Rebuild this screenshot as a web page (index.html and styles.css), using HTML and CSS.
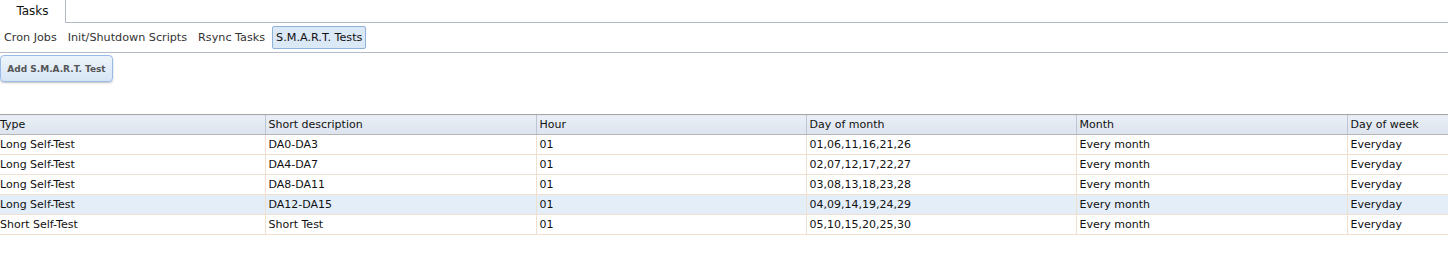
FILE: index.html
```html
<!DOCTYPE html>
<html>
<head>
  <title>Tasks</title>
  <link rel="stylesheet" href="styles.css">
</head>
<body>
  <div class="tab-bar">
    <a href="#" class="tab active">Tasks</a>
  </div>

  <div class="sub-tabs">
    <a href="#">Cron Jobs</a>
    <a href="#">Init/Shutdown Scripts</a>
    <a href="#">Rsync Tasks</a>
    <a href="#" class="active">S.M.A.R.T. Tests</a>
  </div>

  <div class="toolbar">
    <button type="button" class="add-btn">Add S.M.A.R.T. Test</button>
  </div>

  <table class="grid">
    <colgroup>
      <col class="c1">
      <col class="c2">
      <col class="c3">
      <col class="c4">
      <col class="c5">
      <col>
    </colgroup>
    <thead>
      <tr>
        <th>Type</th>
        <th>Short description</th>
        <th>Hour</th>
        <th>Day of month</th>
        <th>Month</th>
        <th>Day of week</th>
      </tr>
    </thead>
    <tbody>
      <tr>
        <td>Long Self-Test</td>
        <td>DA0-DA3</td>
        <td>01</td>
        <td>01,06,11,16,21,26</td>
        <td>Every month</td>
        <td>Everyday</td>
      </tr>
      <tr>
        <td>Long Self-Test</td>
        <td>DA4-DA7</td>
        <td>01</td>
        <td>02,07,12,17,22,27</td>
        <td>Every month</td>
        <td>Everyday</td>
      </tr>
      <tr>
        <td>Long Self-Test</td>
        <td>DA8-DA11</td>
        <td>01</td>
        <td>03,08,13,18,23,28</td>
        <td>Every month</td>
        <td>Everyday</td>
      </tr>
      <tr class="hover">
        <td>Long Self-Test</td>
        <td>DA12-DA15</td>
        <td>01</td>
        <td>04,09,14,19,24,29</td>
        <td>Every month</td>
        <td>Everyday</td>
      </tr>
      <tr>
        <td>Short Self-Test</td>
        <td>Short Test</td>
        <td>01</td>
        <td>05,10,15,20,25,30</td>
        <td>Every month</td>
        <td>Everyday</td>
      </tr>
    </tbody>
  </table>
</body>
</html>
```

FILE: styles.css
```css
body {
  font-family: "DejaVu Sans", Verdana, sans-serif;
  font-size: 11px;
  color: #111;
  background-color: white;
  margin: 0;
  padding: 0;
}

a {
  color: #222;
  text-decoration: none;
}

/* top tab strip */
.tab-bar {
  display: flex;
  height: 22px;
  border-bottom: 1px solid #b3bac6;
}

.tab {
  display: block;
  width: 66px;
  height: 23px;
  line-height: 23px;
  text-align: center;
  font-size: 12px;
  color: #111;
  background-color: white;
  border-right: 1px solid #b3bac6;
  box-sizing: border-box;
}

/* second row of tabs */
.sub-tabs {
  display: flex;
  align-items: center;
  gap: 1px;
  height: 29px;
  padding-left: 0;
  border-bottom: 1px solid #b3bac6;
}

.sub-tabs a {
  font-size: 11.2px;
  padding: 4px 3px;
  border: 1px solid transparent;
  border-radius: 2px;
  color: #333;
}

.sub-tabs a + a {
  margin-left: 2px;
}

.sub-tabs a.active {
  color: #111;
  background-color: #dbe8f6;
  border-color: #8fb2d9;
}

.toolbar {
  padding-top: 2px;
  height: 59px;
}

.add-btn {
  width: 113px;
  height: 27px;
  margin-left: 0;
  font-family: "DejaVu Sans", Verdana, sans-serif;
  font-size: 9px;
  font-weight: bold;
  color: #555;
  background: linear-gradient(#eef4fb, #d6e5f5);
  border: 1px solid #99bbe8;
  border-radius: 4px;
  box-shadow: 0 1px 2px rgba(0,0,0,0.25);
  cursor: pointer;
}

/* task grid */
.grid {
  width: 100%;
  border-collapse: collapse;
  table-layout: fixed;
}

.grid col.c1 { width: 265px; }
.grid col.c2 { width: 271px; }
.grid col.c3 { width: 270px; }
.grid col.c4 { width: 270px; }
.grid col.c5 { width: 271px; }

.grid th {
  height: 19px;
  padding: 0 3px;
  text-align: left;
  font-weight: normal;
  color: #111;
  background: linear-gradient(#eaeff5, #dde4ee);
  border-top: 1px solid #a5a5a5;
  border-bottom: 1px solid #b5b5b5;
  border-left: 1px solid #bcc5d2;
}

.grid td {
  height: 19px;
  padding: 0 3px;
  white-space: nowrap;
  overflow: hidden;
  border-bottom: 1px solid #f1e0d0;
  border-left: 1px solid #f1e0d0;
}

.grid th:first-child,
.grid td:first-child {
  padding-left: 0;
  border-left: none;
}

.grid tr.hover td {
  background-color: #e3eef9;
}
```
